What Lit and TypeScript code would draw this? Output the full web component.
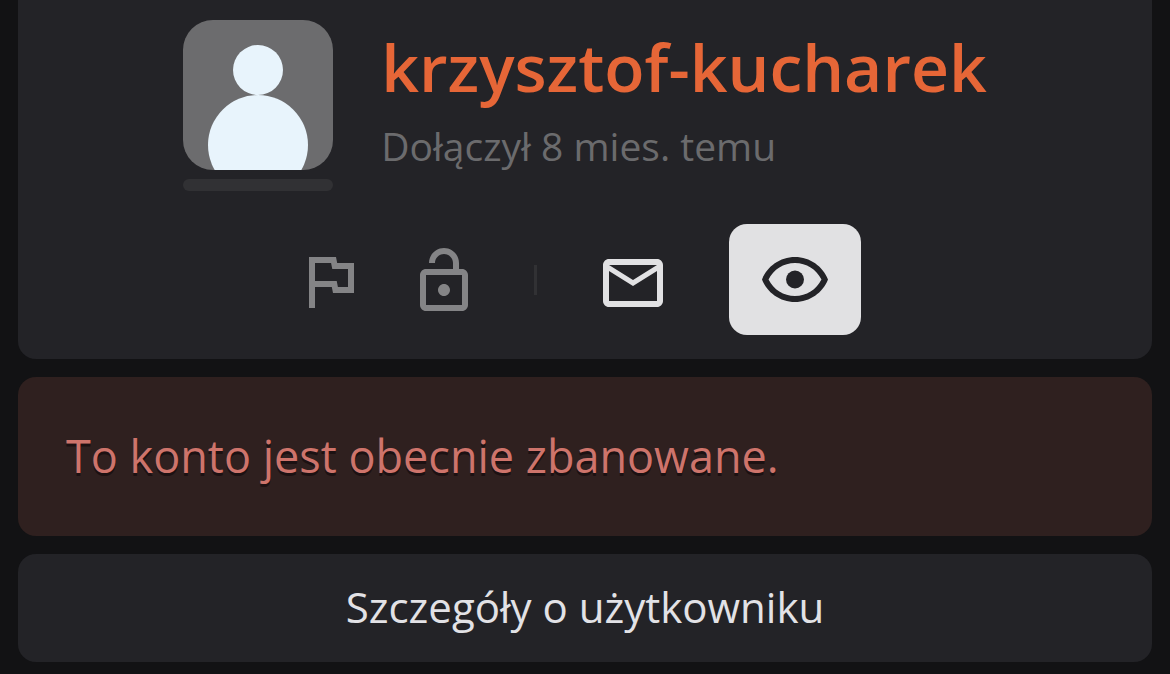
import { LitElement, html, css } from "lit";
import { customElement } from "lit/decorators.js";

@customElement("app-root")
export class AppRoot extends LitElement {
  static styles = css`
    :host {
      display: block;
      min-height: 100vh;
      box-sizing: border-box;
      padding: 0 18px 12px;
      background: #121214;
      font-family: "Open Sans", "Noto Sans", sans-serif;
      color: #e2e2e6;
    }
    .page {
      display: flex;
      flex-direction: column;
      gap: 18px;
    }
    .card {
      background: #232327;
      border-radius: 18px;
    }
    .profile {
      padding: 20px 24px 24px;
      border-radius: 0 0 18px 18px;
    }
    .identity {
      display: flex;
      justify-content: center;
      gap: 48px;
    }
    .portrait {
      display: flex;
      flex-direction: column;
      gap: 9px;
      width: 150px;
      flex: none;
    }
    .avatar {
      display: block;
      width: 150px;
      height: 150px;
      border-radius: 30px;
    }
    .rank {
      height: 12px;
      border-radius: 6px;
      background: #313134;
    }
    .name {
      margin: 0;
      padding-top: 1px;
      font-size: 66px;
      line-height: 90px;
      font-weight: 600;
    }
    .name a {
      color: #e66637;
      text-decoration: none;
    }
    .joined {
      margin: 0;
      padding-top: 8px;
      font-size: 39px;
      line-height: 54px;
      color: #6b6b6d;
    }
    .actions {
      display: flex;
      justify-content: center;
      align-items: center;
      padding: 33px 36px 0 0;
    }
    .action {
      display: block;
      margin: 0;
      padding: 21px 21px 18px;
      border: 0;
      border-radius: 18px;
      background: none;
      color: #848486;
      cursor: pointer;
    }
    .wide {
      padding: 21px 30px 18px;
      color: #e1e1e3;
    }
    .mail {
      padding: 23px 30px 16px;
    }
    .active {
      margin-left: 30px;
      background: #e1e1e3;
      color: #232327;
    }
    .icon {
      display: block;
      width: 72px;
      height: 72px;
      fill: currentColor;
    }
    .divider {
      width: 3px;
      height: 30px;
      margin: 0 30px 0 33px;
      background: #313134;
    }
    .alert {
      margin: 0;
      padding: 47px 48px 49px;
      border-radius: 18px;
      background: #2f201f;
      color: #ce746b;
      font-size: 45px;
      line-height: 63px;
      text-shadow: 0 3px 0 #1c1112;
    }
    .details {
      display: block;
      width: 100%;
      margin: 0;
      padding: 23px 24px 25px;
      border: 0;
      font-family: inherit;
      font-size: 42px;
      line-height: 60px;
      color: #e2e2e6;
      cursor: pointer;
    }
  `;

  render() {
    return html`
      <main class="page">
        <section class="card profile">
          <div class="identity">
            <div class="portrait">
              <svg class="avatar" viewBox="0 0 150 150" aria-hidden="true">
                <rect width="150" height="150" fill="#6c6c6e" />
                <circle cx="75" cy="50" r="25" fill="#e8f4fc" />
                <circle cx="75" cy="125" r="50" fill="#e8f4fc" />
              </svg>
              <div class="rank"></div>
            </div>
            <div>
              <h1 class="name"><a href="#">krzysztof-kucharek</a></h1>
              <p class="joined">Dołączył 8 mies. temu</p>
            </div>
          </div>
          <div class="actions">
            <button class="action" type="button" aria-label="Zgłoś">
              <svg class="icon" viewBox="0 0 24 24">
                <path d="M12.36 6l.4 2H18v6h-3.36l-.4-2H7V6h5.36M14 4H5v17h2v-7h5.6l.4 2h7V6h-5.6L14 4z" />
              </svg>
            </button>
            <button class="action" type="button" aria-label="Zablokuj">
              <svg class="icon" viewBox="0 0 24 24">
                <path d="M12 17c1.1 0 2-.9 2-2s-.9-2-2-2-2 .9-2 2 .9 2 2 2zm6-9h-1V6c0-2.76-2.24-5-5-5S7 3.24 7 6h2c0-1.66 1.34-3 3-3s3 1.34 3 3v2H6c-1.1 0-2 .9-2 2v10c0 1.1.9 2 2 2h12c1.1 0 2-.9 2-2V10c0-1.1-.9-2-2-2zm0 12H6V10h12v10z" />
              </svg>
            </button>
            <span class="divider"></span>
            <button class="action wide mail" type="button" aria-label="Wiadomość">
              <svg class="icon" viewBox="0 0 24 24">
                <path d="M22 6c0-1.1-.9-2-2-2H4c-1.1 0-2 .9-2 2v12c0 1.1.9 2 2 2h16c1.1 0 2-.9 2-2V6zm-2 0l-8 5-8-5h16zm0 12H4V8l8 5 8-5v10z" />
              </svg>
            </button>
            <button class="action wide active" type="button" aria-label="Obserwuj">
              <svg class="icon" viewBox="0 0 24 24">
                <path d="M12 6c3.79 0 7.17 2.13 8.82 5.5C19.17 14.87 15.79 17 12 17s-7.17-2.13-8.82-5.5C4.83 8.13 8.21 6 12 6m0-2C7 4 2.73 7.11 1 11.5 2.73 15.89 7 19 12 19s9.27-3.11 11-7.5C21.27 7.11 17 4 12 4z" />
                <circle cx="12" cy="11.5" r="3" />
              </svg>
            </button>
          </div>
        </section>
        <p class="alert">To konto jest obecnie zbanowane.</p>
        <button class="card details" type="button">Szczegóły o użytkowniku</button>
      </main>
    `;
  }
}
